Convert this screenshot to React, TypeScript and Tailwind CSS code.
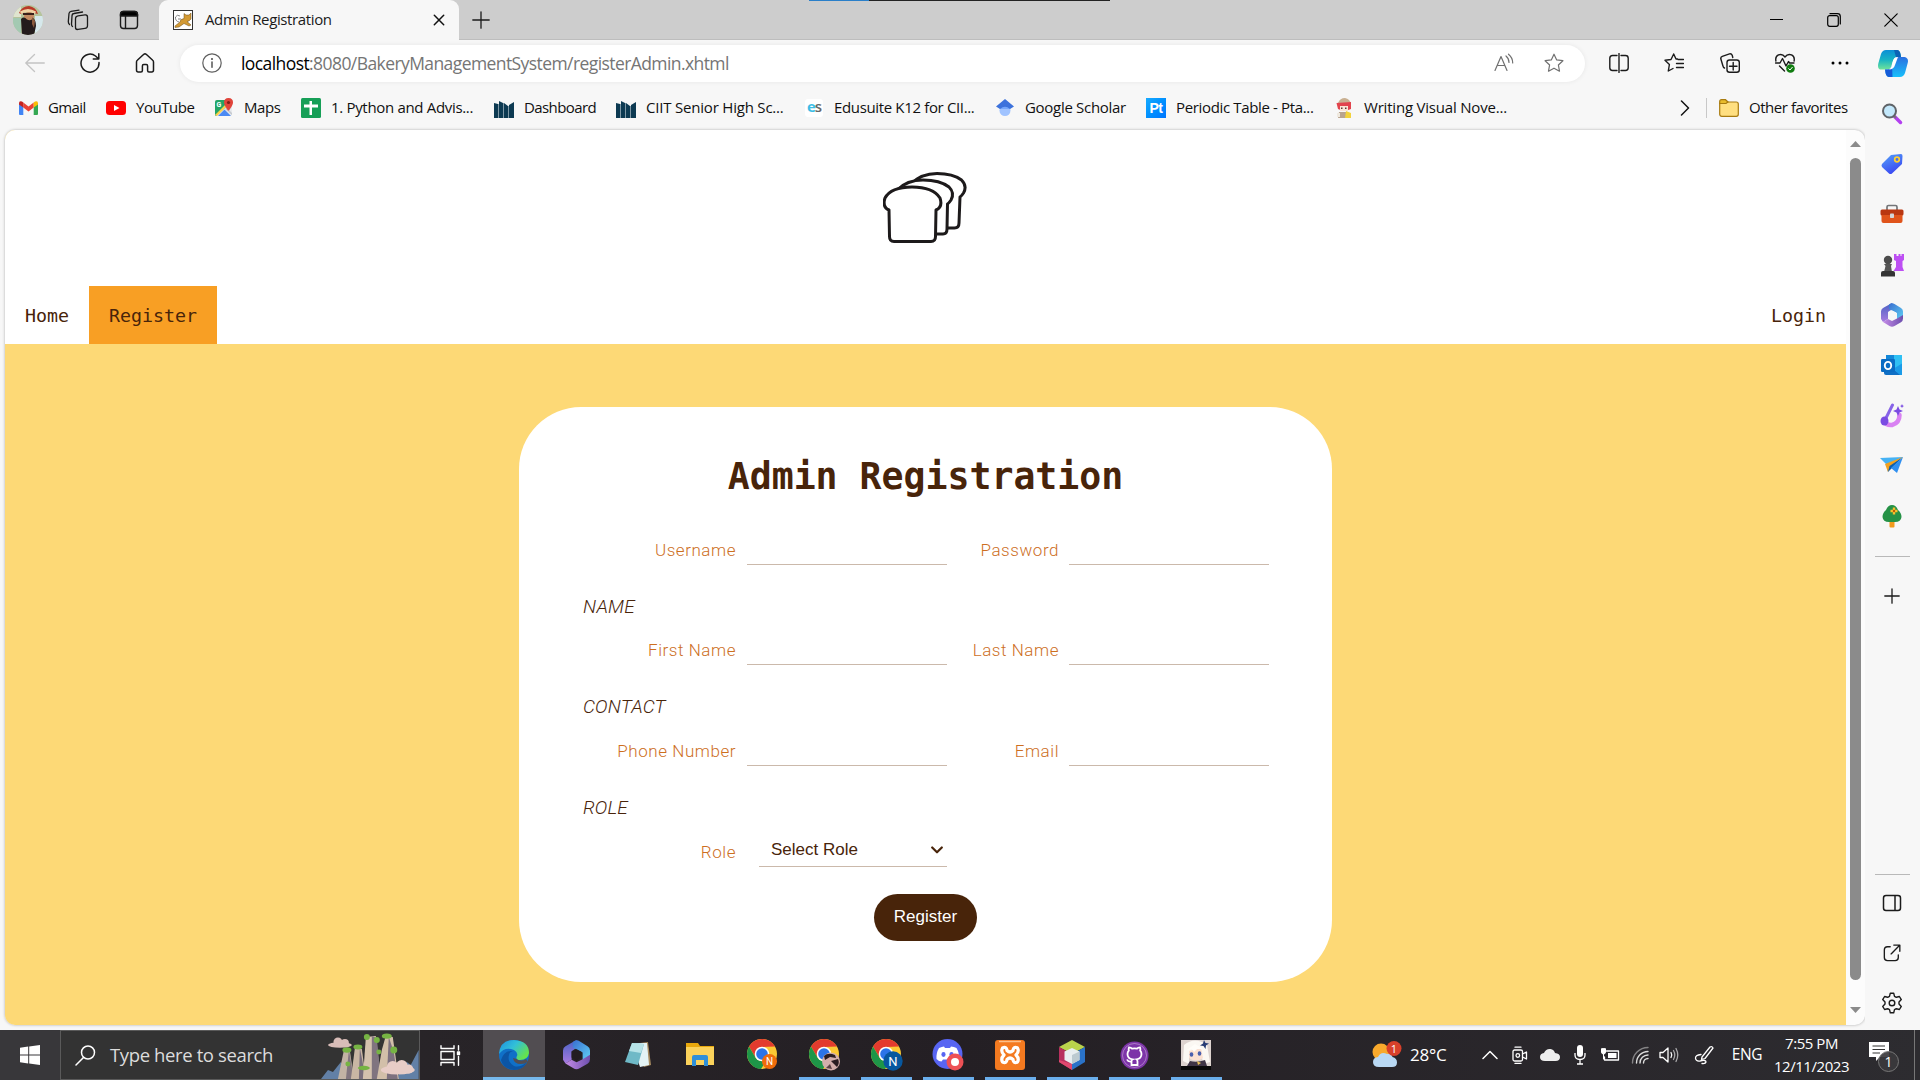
import type { ReactNode } from "react";

const UI = "font-['Open_Sans','Noto_Sans',sans-serif]";

function Cell({ w, children, className = "" }: { w: string; children?: ReactNode; className?: string }) {
  return <div className={`flex shrink-0 items-center justify-center ${w} ${className}`}>{children}</div>;
}

function Line({ children, size = 20, sw = 1.2, color = "#1b1b1b", box = 20 }: { children: ReactNode; size?: number; sw?: number; color?: string; box?: number }) {
  return (
    <svg width={size} height={size} viewBox={`0 0 ${box} ${box}`} fill="none" stroke={color} strokeWidth={sw} strokeLinecap="round" strokeLinejoin="round" className="shrink-0">
      {children}
    </svg>
  );
}

/* ---------- Tab strip ---------- */

function Avatar() {
  return (
    <svg width="30" height="30" viewBox="0 0 30 30">
      <defs><clipPath id="av"><circle cx="15" cy="15" r="15" /></clipPath></defs>
      <g clipPath="url(#av)">
        <rect width="30" height="30" fill="#b5c49c" />
        <rect x="0" y="0" width="8" height="12" fill="#dfe4cf" />
        <rect x="22" y="11" width="8" height="19" fill="#d6e8ec" />
        <rect x="0" y="13" width="8" height="17" fill="#a3c9b2" />
        <path d="M6 8 Q9 1 16 1 Q23 2 25 9 L21 8 Q14 4 8 9Z" fill="#b93a28" />
        <path d="M7 6.500 Q15 1.500 23 6.500 L22 9 Q14 5 8 9Z" fill="#efd2a4" />
        <ellipse cx="16" cy="11.500" rx="5" ry="4.500" fill="#c48a62" />
        <path d="M10 8 H21 V10 H10Z" fill="#3a1f1a" />
        <path d="M8 14 Q11 11 14 14.500 Q18 16.500 20 13 Q23 15 23 21 L21 30 H9Z" fill="#231b1c" />
        <path d="M19 12 l3 4 -1 7 -2 -4z" fill="#8a5a3e" />
      </g>
    </svg>
  );
}

function TabStrip() {
  return (
    <div className="flex h-10 items-stretch bg-[#cdcdcd]">
      <div className="flex w-[159px] items-center border-b border-[#bdbdbd]">
        <Cell w="w-[56px]"><Avatar /></Cell>
        <Cell w="w-[43px]">
          <Line size={22} sw={1.300} box={22}>
            <rect x="8.500" y="6" width="12" height="13.500" rx="2.500" transform="skewY(-8) translate(0 2.500)" />
            <path d="M5.500 17.500 C4.500 17 4.500 16 4.500 15 L5 7 Q5 4.800 7 4.500 L15.500 3" />
            <path d="M2.500 15.500 C1.500 14.500 1.300 14 1.300 12.500 L2 4.500 Q2.200 2.600 4 2.300 L12 1.200" />
          </Line>
        </Cell>
        <Cell w="w-[60px]">
          <Line size={20} sw={1.400}>
            <rect x="1.500" y="1.500" width="17" height="17" rx="3" />
            <path d="M6.500 6 V18" />
            <path d="M1.500 6 V4.500 Q1.500 1.500 4.500 1.500 H15.500 Q18.500 1.500 18.500 4.500 V6Z" fill="#000" />
          </Line>
        </Cell>
      </div>
      <div className="flex w-[300px] items-center rounded-t-[9px] bg-[#f7f7f7] pl-[14px]">
        <svg width="20" height="20" viewBox="0 0 20 20">
          <rect x=".5" y=".5" width="19" height="19" fill="#fff" stroke="#333" />
          <path d="M2 16 L7 12 Q7 9 11 8.500 L11 3.500 L13 5 L16 5 L18 3 L18 9 Q16 11.500 14 11.500 L18 15 L16 16 L11 13.500 L6 17 L2 17.500Z" fill="#d39a34" stroke="#6b4a14" strokeWidth=".5" />
          <path d="M6 12 Q2 11 2.500 7 Q4 4 7 6 M8 9 L5 9" stroke="#666" fill="none" strokeWidth=".8" />
        </svg>
        <span className={`-mt-0.5 ml-3 w-[228px] whitespace-nowrap text-[15px] tracking-[-0.37px] text-[#1b1b1b] ${UI}`}>Admin Registration</span>
        <Line size={12} sw={1.500} box={12} color="#111"><path d="M1.300 1.300 L10.700 10.700 M10.700 1.300 L1.300 10.700" /></Line>
      </div>
      <div className="flex flex-1 items-center border-b border-[#bdbdbd]">
        <Cell w="w-[43px]"><Line size={18} sw={1.300} box={18}><path d="M9 .8 V17.200 M.8 9 H17.200" /></Line></Cell>
        <div className="ml-[307px] flex h-px self-start">
          <div className="h-px w-[60px] bg-[#2a7fc9]" />
          <div className="h-px w-[241px] bg-[#222]" />
        </div>
        <div className="flex-1" />
        <Cell w="w-[57px]"><div className="h-px w-[13px] bg-black" /></Cell>
        <Cell w="w-[57px]">
          <Line size={14} sw={1.200} box={14} color="#000"><rect x=".7" y="2.700" width="10.600" height="10.600" rx="2" /><path d="M3 .7 H10.500 Q13.300 .7 13.300 3.500 V11" /></Line>
        </Cell>
        <Cell w="w-[58px]"><Line size={14} sw={1.200} box={14} color="#000"><path d="M.8 .8 L13.200 13.200 M13.200 .8 L.8 13.200" /></Line></Cell>
      </div>
    </div>
  );
}

/* ---------- Address bar ---------- */

const STAR = "M10 1.200 L12.700 6.900 L18.900 7.700 L14.400 12 L15.500 18.200 L10 15.200 L4.500 18.200 L5.600 12 L1.100 7.700 L7.300 6.900Z";

function Copilot() {
  return (
    <svg width="30" height="27" viewBox="0 0 30 27">
      <defs>
        <linearGradient id="cp1" x1="0" y1="0" x2="0" y2="1"><stop offset="0" stopColor="#0a8fd6" /><stop offset=".5" stopColor="#17b3c4" /><stop offset="1" stopColor="#6fe39a" /></linearGradient>
        <linearGradient id="cp2" x1="0" y1="0" x2="0" y2="1"><stop offset="0" stopColor="#2a6fe0" /><stop offset="1" stopColor="#18c0fb" /></linearGradient>
      </defs>
      <path d="M8 0 H19 Q21.500 0 22.500 4 L23 7 H19 Q16.500 7 15.500 10 L13.500 16 Q12.500 19.500 9 19.500 H3.500 Q-1 19.500 .3 13.500 L3 4 Q4.500 0 8 0Z" fill="url(#cp1)" />
      <path d="M22 27 H11 Q8.500 27 7.500 23 L7 19.500 H10 Q12.500 19.500 13.500 16.500 L16 10.500 Q17.500 7 21 7 H26.500 Q31 8 29.700 13 L27 23 Q25.500 27 22 27Z" fill="url(#cp2)" />
      <path d="M7 19.500 H10 Q12.500 19.500 13.500 16.500 L14 15 L14.500 27 H11 Q8.500 27 7.500 23Z" fill="#1546cf" opacity=".8" />
      <path d="M16 0 H19 Q21.500 0 22.500 4 L23 7 H18Z" fill="#0b63b5" />
      <path d="M14.500 12 Q15.500 7.200 20 7 L17.200 14.500 Q15.800 19.500 11 19.500 Q12.800 18.800 13.500 16Z" fill="#fff" />
    </svg>
  );
}

function AddressBar() {
  return (
    <div className="flex h-[46px] items-center bg-[#f7f7f7] pl-[7px]">
      <Cell w="w-[55px]"><Line color="#c4c4c4" sw={1.300}><path d="M19.300 10 H.8 M9.500 1.500 L.8 10 L9.500 18.500" /></Line></Cell>
      <Cell w="w-[55px]"><Line sw={1.500}><path d="M19 9.500 A9 9 0 1 1 15.500 3 L18.500 5.800 M18.800 .8 V6 H13.300" /></Line></Cell>
      <Cell w="w-[55px]"><Line sw={1.500}><path d="M1.500 9 Q1.500 8 2.300 7.300 L8.800 1.300 Q10 .3 11.200 1.300 L17.700 7.300 Q18.500 8 18.500 9 V17 Q18.500 19 16.800 19 H14 Q12.600 19 12.600 17.500 V13 Q12.600 11.500 11.300 11.500 H8.700 Q7.400 11.500 7.400 13 V17.500 Q7.400 19 6 19 H3.200 Q1.500 19 1.500 17Z" /></Line></Cell>
      <div className="ml-[8px] flex h-[37px] w-[1405px] items-center rounded-full bg-white shadow-[0_0_5px_rgba(0,0,0,0.07)]">
        <Cell w="w-[61px]"><div className="pl-[3px]"><Line color="#5f5f5f" sw={1.200}><circle cx="10" cy="10" r="9.200" /><path d="M10 9 V14.300" strokeWidth="1.600" /><circle cx="10" cy="6" r=".5" fill="#5f5f5f" /></Line></div></Cell>
        <div className={`flex-1 whitespace-nowrap text-[17.5px] tracking-[-0.58px] text-[#757575] ${UI}`}><span className="text-black">localhost</span>:8080/BakeryManagementSystem/registerAdmin.xhtml</div>
        <Cell w="w-[50px]"><Line color="#707070"><path d="M1 17.500 L7 3.500 L13 17.500 M3.200 12.500 H10.800 M12 3 Q15 5.500 15 9.500 M14.500 1.200 Q18.700 4.500 18.700 10" /></Line></Cell>
        <Cell w="w-[50px]"><Line color="#707070"><path d={STAR} /></Line></Cell>
        <div className="w-[6px]" />
      </div>
      <div className="w-[7px]" />
      <Cell w="w-[54px]"><Line sw={1.400}><path d="M8 2.500 H3.500 Q.8 2.500 .8 5.200 V14.800 Q.8 17.500 3.500 17.500 H8 M12 2.500 H16.500 Q19.200 2.500 19.200 5.200 V14.800 Q19.200 17.500 16.500 17.500 H12 M10 .5 V19.500" /></Line></Cell>
      <Cell w="w-[56px]"><Line sw={1.400}><path d="M13.500 6 L12 6 L9.700 1 L7 6.500 L1 7.300 L5.400 11.500 L4.300 18 L9 15.500 M14 6.500 H19.500 M12.500 10.500 H19.500 M12.500 14.500 H19.500" /></Line></Cell>
      <Cell w="w-[55px]"><Line sw={1.400}><rect x="7" y="7" width="12.300" height="12.300" rx="2.500" /><path d="M13.200 9.500 V17 M9.500 13.200 H17 M4.500 15 Q3.300 14.700 2.800 12.500 L.8 5.800 Q.5 4 2.300 3.300 L9.500 .9 Q11.500 .5 12.200 2.300 L12.800 4.500" /></Line></Cell>
      <Cell w="w-[55px]">
        <Line sw={1.400}><path d="M.9 8 Q0 3.500 3.500 1.900 Q7.500 .5 10 4 Q12.500 .5 16.500 1.900 Q20 3.500 19.100 8 M.5 10 H5 L7.500 5.500 L11 13 L13.500 8.500 L14.500 10 H19 M4.500 13 L9.500 18" /><circle cx="15.500" cy="15.500" r="4.300" fill="#107c10" stroke="none" /><path d="M13.700 15.700 L15 17 L17.300 14.300" stroke="#fff" strokeWidth="1" /></Line>
      </Cell>
      <Cell w="w-[55px]"><svg width="18" height="4" viewBox="0 0 18 4"><circle cx="2" cy="2" r="1.500" /><circle cx="9" cy="2" r="1.500" /><circle cx="16" cy="2" r="1.500" /></svg></Cell>
      <Cell w="w-[51px]"><Copilot /></Cell>
    </div>
  );
}

/* ---------- Favorites ---------- */

const ciit = (
  <svg width="20" height="20" viewBox="0 0 20 20"><path d="M0 5 L4 6 V20 H0Z M5 3 L9 5 V20 H5Z M10 5 L14 8 V20 H10Z M15 7 L20 4 V20 H15Z" fill="#0d3a52" /><path d="M4 6h1V20H4Z M9 5h1V20H9Z M14 8h1V20H14Z" fill="#7f98a6" /></svg>
);

const favorites: { label: string; w: string; track: string; icon: ReactNode }[] = [
  { label: "Gmail", w: "w-[88px]", track: "tracking-[-0.6px]", icon: <svg width="19" height="15" viewBox="0 0 19 15"><path d="M0 2 V13 Q0 14 1 14 H4.300 V5Z" fill="#4285f4" /><path d="M19 2 V13 Q19 14 18 14 H14.700 V5Z" fill="#34a853" /><path d="M4.300 1.500 L9.500 5.500 L14.700 1.500 V6.500 L9.500 10.500 L4.300 6.500Z" fill="#ea4335" /><path d="M0 2.500 Q0 -.8 3 .5 L4.300 1.500 V6.500 L0 3.500Z" fill="#c5221f" /><path d="M19 2.500 Q19 -.8 16 .5 L14.700 1.500 V6.500 L19 3.500Z" fill="#fbbc04" /></svg> },
  { label: "YouTube", w: "w-[108px]", track: "tracking-[-0.45px]", icon: <svg width="20" height="14" viewBox="0 0 20 14"><rect width="20" height="14" rx="3.500" fill="#f00" /><path d="M8 4 L13.500 7 L8 10Z" fill="#fff" /></svg> },
  { label: "Maps", w: "w-[87px]", track: "tracking-[-0.45px]", icon: <svg width="20" height="20" viewBox="0 0 20 20"><rect x="1" y="2" width="17" height="16" rx="2" fill="#e8eaed" /><path d="M3 2 H13 L12 9 L2 18 Q1 18 1 16 V4 Q1 2 3 2Z" fill="#23a566" /><path d="M4 18 L10.500 11.500 L17 18Z" fill="#4a89f3" /><path d="M11 11 L12.500 9.500 L18 15 V17Z" fill="#c5c9cf" /><path d="M3 18 L13 8 L11.500 6.500 L1 17Z" fill="#fcd04b" /><text x="2.500" y="9" fontSize="7" fill="#fff" fontWeight="700" fontFamily="Roboto">G</text><path d="M14.500 0 Q19 0 19 4.500 Q19 7 15 12.500 H14 Q10 7 10 4.500 Q10 0 14.500 0Z" fill="#e0443a" /><circle cx="14.500" cy="4.500" r="1.600" fill="#7e1d16" /></svg> },
  { label: "1. Python and Advis...", w: "w-[193px]", track: "tracking-[-0.32px]", icon: <svg width="20" height="20" viewBox="0 0 20 20"><rect width="20" height="20" rx="1.500" fill="#169f57" /><path d="M8.500 3 H11 V17 H8.500Z M3 6.500 H17 V9.500 H3Z" fill="#fff" /></svg> },
  { label: "Dashboard", w: "w-[122px]", track: "tracking-[-0.6px]", icon: ciit },
  { label: "CIIT Senior High Sc...", w: "w-[188px]", track: "tracking-[-0.2px]", icon: ciit },
  { label: "Edusuite K12 for CII...", w: "w-[191px]", track: "tracking-[-0.35px]", icon: <div className="flex h-[18px] w-[18px] items-center justify-center rounded-[3px] bg-white text-[15px] leading-none tracking-[-1px] text-[#666] font-['Open_Sans',sans-serif]"><span className="-mt-1 font-bold text-[#3dbde5]">e</span><span className="-mt-1 font-semibold">s</span></div> },
  { label: "Google Scholar", w: "w-[151px]", track: "tracking-[-0.3px]", icon: <svg width="18" height="18" viewBox="0 0 18 18"><circle cx="9" cy="11.500" r="5.500" fill="#a0c3ff" /><path d="M3.500 10 Q9 4 14.500 10Z" fill="#76a7fa" /><path d="M9 0 L0 7.500 L4 10 Q9 5.500 14 10 L18 7.500Z" fill="#3c72dc" /></svg> },
  { label: "Periodic Table - Pta...", w: "w-[188px]", track: "tracking-[-0.35px]", icon: <div className="flex h-5 w-5 items-center justify-center bg-linear-to-br from-[#17aaff] to-[#0075ff] text-[14px] leading-none font-bold tracking-[-0.5px] text-white font-['Liberation_Sans',sans-serif]">Pt</div> },
  { label: "Writing Visual Nove...", w: "w-[200px]", track: "tracking-[-0.2px]", icon: <svg width="18" height="20" viewBox="0 0 18 20"><path d="M3 5 Q5 0 10 0 Q15 1 16 6 L13 7 H4Z" fill="#c9b091" /><path d="M1.500 5 L16 4 V11 Q9 14 3 11Z" fill="#e2444d" /><path d="M5 8 H13 V13 H5Z" fill="#fbe5d6" /><path d="M6 9.500h1.500v1.500H6z M10 9.500h1.500v1.500H10z" fill="#5b3b36" /><path d="M4 14 H13 L14 20 H3Z" fill="#b9a48e" /><path d="M11 13 L16 15 V20 H10Z" fill="#f2d23c" /><path d="M2 15h3v4H2z" fill="#efe9df" /></svg> },
];

function Favorites() {
  return (
    <div className={`flex h-[44px] items-center bg-[#f7f7f7] pl-[18px] text-[15px] text-[#111] ${UI}`}>
      {favorites.map((f) => (
        <div key={f.label} className={`flex shrink-0 items-center gap-[10px] whitespace-nowrap ${f.w}`}>
          <Cell w="w-5">{f.icon}</Cell>
          <span className={`-mt-0.5 ${f.track}`}>{f.label}</span>
        </div>
      ))}
      <div className="w-[143px]" />
      <Line size={16} sw={1.500} box={16} color="#111"><path d="M4.500 1 L11.500 8 L4.500 15" /></Line>
      <div className="mr-3 ml-[13px] h-5 w-px bg-[#c8c8c8]" />
      <svg width="20" height="18" viewBox="0 0 20 18"><rect x=".7" y="3" width="18.600" height="14.300" rx="2" fill="#ffdf80" stroke="#a87b10" strokeWidth="1.200" /><path d="M.7 4.500 V2.500 Q.7 .7 2.500 .7 H6.500 L9 3 L7 4.500Z" fill="#e8bb2c" stroke="#a87b10" strokeWidth="1.200" /></svg>
      <span className="-mt-0.5 ml-[10px] whitespace-nowrap tracking-[-0.45px]">Other favorites</span>
    </div>
  );
}

/* ---------- Web page ---------- */

function Bread() {
  return (
    <svg width="84" height="72" viewBox="0 0 84 72" fill="#fff" stroke="#1d1a1b" strokeWidth="3" strokeLinejoin="round">
      <path d="M28 12 Q38 1.500 54 1.500 Q70 1.500 78.500 8 Q84.500 14 80.500 21 Q78.500 24 77 25 L76 51 Q76 56 71.500 56 H60" />
      <path d="M14 18 Q24 8 40 8 Q57 8 66 15 Q72 21 68 28 Q66 31 64.500 32 L64 57 Q64 62 60 62 H50" />
      <path d="M6 38 Q-1 35 2 26 Q8 15 29 15 Q50 15 57 26 Q60 35 53 38 L52.500 64.500 Q52.500 69.500 48 69.500 H11 Q6.500 69.500 6.500 64.500Z" />
    </svg>
  );
}

const LABEL = "text-right text-[17px] font-light tracking-[0.55px] whitespace-nowrap text-[#cd6f1f] font-['Roboto',sans-serif]";

function Field({ label, w, gap }: { label: string; w: string; gap: string }) {
  return (
    <label className="flex h-[30px] items-stretch">
      <span className={`shrink-0 leading-[30px] ${w} ${LABEL}`}>{label}</span>
      <input className={`w-[200px] border-b border-[#cbb9ab] bg-transparent outline-none ${gap}`} />
    </label>
  );
}

function Heading({ children }: { children: ReactNode }) {
  return <div className="mt-[26px] mb-3 h-8 pl-[64px] text-[19px] leading-8 font-light tracking-[0.15px] text-[#48240a] italic font-['Roboto',sans-serif]">{children}</div>;
}

const MONO = "font-['DejaVu_Sans_Mono',monospace] text-[#48240a]";

function Page() {
  return (
    <div className="flex h-[895px] w-[1860px] overflow-hidden rounded-[10px] bg-[#fcfcfc] shadow-[0_0_3px_rgba(0,0,0,0.3)]">
      <div className="w-[1841px] bg-[#fdd976]">
        <header className="h-[214px] bg-white">
          <div className="flex h-[156px] justify-center pt-[42px] pr-px"><Bread /></div>
          <nav className={`flex h-[58px] items-center text-[18.3px] ${MONO}`}>
            <a className="w-[84px] pt-0.5 pl-5">Home</a>
            <a className="flex h-full w-32 items-center justify-center bg-[#f89f24] pt-0.5">Register</a>
            <a className="ml-auto pt-0.5 pr-5">Login</a>
          </nav>
        </header>
        <main className="mx-auto mt-[63px] h-[575px] w-[813px] rounded-[62px] bg-white pt-10">
          <h1 className={`text-center text-[36.5px] leading-[60px] font-bold ${MONO}`}>Admin Registration</h1>
          <div className="mt-7 flex"><Field label="Username" w="w-[217px]" gap="ml-[11px]" /><Field label="Password" w="w-[112px]" gap="ml-[10px]" /></div>
          <Heading>NAME</Heading>
          <div className="flex"><Field label="First Name" w="w-[217px]" gap="ml-[11px]" /><Field label="Last Name" w="w-[112px]" gap="ml-[10px]" /></div>
          <Heading>CONTACT</Heading>
          <div className="mt-[13px] flex"><Field label="Phone Number" w="w-[217px]" gap="ml-[11px]" /><Field label="Email" w="w-[112px]" gap="ml-[10px]" /></div>
          <Heading>ROLE</Heading>
          <div className="mt-[13px] flex h-[30px]">
            <span className={`w-[217px] leading-[30px] ${LABEL}`}>Role</span>
            <div className="ml-[23px] flex w-[188px] items-center justify-between border-b border-[#cbb9ab] pr-1 pb-[3px] pl-[12px] text-[17px] text-[#48240a] font-['Liberation_Sans',sans-serif]">
              <span>Select Role</span>
              <Line size={12} sw={2.200} box={12} color="#48240a"><path d="M1.200 3.500 L6 8.300 L10.800 3.500" /></Line>
            </div>
          </div>
          <button className="mx-auto mt-[27px] flex h-[47px] w-[103px] justify-center rounded-full bg-[#48240a] pt-[10px] text-[17px] text-white font-['Liberation_Sans',sans-serif]">Register</button>
        </main>
      </div>
      <div className="flex w-[19px] flex-col items-center">
        <svg width="11" height="6" viewBox="0 0 11 6" className="mt-[11px]"><path d="M5.500 0 L11 6 H0Z" fill="#8b8b8b" /></svg>
        <div className="mt-[11px] h-[822px] w-[11px] rounded-full bg-[#8b8b8b]" />
        <svg width="11" height="6" viewBox="0 0 11 6" className="mt-[27px]"><path d="M5.500 6 L11 0 H0Z" fill="#8b8b8b" /></svg>
      </div>
    </div>
  );
}

/* ---------- Sidebar ---------- */

function M365({ w = 22 }: { w?: number }) {
  return (
    <svg width={w} height={w * 1.1} viewBox="0 0 22 24">
      <defs>
        <linearGradient id="ma" x1="0" y1="0" x2="0" y2="1"><stop offset="0" stopColor="#4a62c4" /><stop offset="1" stopColor="#a87be0" /></linearGradient>
        <linearGradient id="mb" x1="0" y1="0" x2="1" y2="1"><stop offset="0" stopColor="#3a6fd0" /><stop offset="1" stopColor="#5fd0f5" /></linearGradient>
        <linearGradient id="mc" x1="0" y1="0" x2="1" y2="0"><stop offset="0" stopColor="#c48be6" /><stop offset="1" stopColor="#6d4fae" /></linearGradient>
      </defs>
      <path d="M11 0 L2 5 Q0 6.300 0 8.500 V16 L2 19 L7 16 V9 L13 5 Z" fill="url(#ma)" />
      <path d="M8 1.500 Q11 -.8 13.500 1 L20 5 Q22 6.300 22 8.500 V15 L16 16 V10 L8 6Z" fill="url(#mb)" />
      <path d="M22 12 V15.500 Q22 18 20 19.200 L13.500 23 Q11 24.500 8.500 23 L2 19 L7 16 L11 18 L16 15.500Z" fill="url(#mc)" />
      <path d="M11 7.500 L15 9.500 V14.200 L11 16.800 L7 14.200 V9.500Z" fill={w > 24 ? "#221c20" : "#f7f7f7"} />
    </svg>
  );
}

const side: ReactNode[] = [
  <svg width="22" height="22" viewBox="0 0 22 22"><path d="M13 13 L19.500 19.500" stroke="#b340f0" strokeWidth="3.500" strokeLinecap="round" /><path d="M12 12 L15 15" stroke="#777" strokeWidth="2" /><circle cx="8.500" cy="8" r="6.500" fill="#c3e8fb" stroke="#606468" strokeWidth="2" /></svg>,
  <svg width="22" height="22" viewBox="0 0 22 22"><defs><linearGradient id="tg" x1="0" y1="0" x2=".5" y2="1"><stop offset="0" stopColor="#55a5f8" /><stop offset="1" stopColor="#3a48f2" /></linearGradient></defs><path d="M10 2 L20 1 Q21.500 1 21.500 3 L21 11 L11 20.500 Q9.500 21.500 8 20.500 L1 14 Q0 12.500 1 11Z" fill="url(#tg)" /><circle cx="16" cy="6.500" r="2.300" fill="#4870e8" stroke="#ffd02f" strokeWidth="1.700" /></svg>,
  <svg width="24" height="20" viewBox="0 0 24 20"><path d="M7 6 V3 Q7 1.500 8.500 1.500 H15.500 Q17 1.500 17 3 V6" fill="none" stroke="#737578" strokeWidth="1.700" /><rect x=".5" y="5.500" width="23" height="6" rx="1.500" fill="#b93711" /><path d="M1.500 11 H22.500 V17 Q22.500 19 20.500 19 H3.500 Q1.500 19 1.500 17Z" fill="#e0541b" /><rect x="10" y="9.500" width="4" height="4.500" rx=".8" fill="#d3d6d9" /></svg>,
  <svg width="24" height="24" viewBox="0 0 24 24"><path d="M14 1 h2.500 v2 h2 v-2 h2 v2 h1 v-2 H24 V7 L22.500 8 V14 L24 18 H13.500 L16 14 V8 L14 7Z" fill="#bd4ff3" /><circle cx="8" cy="7" r="4.200" fill="#4c4c4c" /><path d="M4 11 H12 L11 13 L12 19 H4 L5.500 13Z" fill="#555" /><path d="M1 20 Q1 18 3 18 H13 Q15 18 15 20 V23.500 H1Z" fill="#343434" /></svg>,
  <M365 />,
  <svg width="22" height="22" viewBox="0 0 22 22"><rect x="5" y="1" width="16" height="13" fill="#2fc0f4" /><path d="M5 1h8v6H5z" fill="#1387d8" /><path d="M3 11 L21 20 V21 H5 Q3 21 3 19Z" fill="#0f6fc5" /><path d="M21 9.500 L12 15 L19 21 H21Z" fill="#1b9be8" /><rect x="0" y="5" width="14" height="13" rx="1.300" fill="#0a6cc4" /><ellipse cx="7" cy="11.500" rx="3.200" ry="3.600" fill="none" stroke="#fff" strokeWidth="1.900" /></svg>,
  <svg width="24" height="25" viewBox="0 0 24 25"><path d="M4 18 Q6 22.500 12 22 Q19.500 20 19.500 12" stroke="#d982f2" strokeWidth="4.500" fill="none" strokeLinecap="round" /><path d="M12.500 2 L6 15" stroke="#8763e8" strokeWidth="3" strokeLinecap="round" /><ellipse cx="4.500" cy="18" rx="4" ry="4.500" fill="#7a4ce2" /><path d="M18 3 l1.500 3.500 L23 8 l-3.500 1.500 L18 13 l-1.500 -3.500 L13 8 l3.500 -1.500Z" fill="#7a4ce2" /><path d="M22 1 l.7 1.500 L24 3 l-1.300 .7 L22 5 l-.7 -1.300 L20 3 l1.300 -.5Z" fill="#7a4ce2" /></svg>,
  <svg width="24" height="18" viewBox="0 0 24 18"><path d="M0 2 L23 1 L8 10Z" fill="#46b2f4" /><path d="M23 1 L7 10 L8 16 L12 12 Z" fill="#0c5fae" /><path d="M23 1 L11 12 L17 17Z" fill="#2f8ff0" /><path d="M23 1 L5 8 L8 16 L9.500 10Z" fill="#f2a11e" /></svg>,
  <svg width="20" height="24" viewBox="0 0 20 24"><rect x="7.500" y="16" width="5" height="7.500" rx="1" fill="#f19a1c" /><path d="M10 1 Q14 1 16 6 Q19.500 9 19.500 13 Q19 18 13 18 H7 Q1 18 .5 13 Q.5 9 4 6 Q6 1 10 1Z" fill="#259246" /><path d="M12 3.500 V10.500 M8.500 7 H15.500" stroke="#fbc02d" strokeWidth="2.400" /><circle cx="12" cy="7" r="1.200" fill="#bb5b05" /></svg>,
];

function Sidebar() {
  return (
    <aside className="flex w-[55px] shrink-0 flex-col items-center bg-[#f7f7f7] pr-px">
      <div className="mt-[3px] flex flex-col">
        {side.map((s, i) => <div key={i} className="flex h-[50.2px] w-[54px] items-center justify-center">{s}</div>)}
      </div>
      <div className="mt-[15px] h-px w-[35px] bg-[#b9b9b9]" />
      <div className="mt-[31px]"><Line size={16} sw={1.300} box={16}><path d="M8 .8 V15.200 M.8 8 H15.200" /></Line></div>
      <div className="flex-1" />
      <div className="mb-[3px] h-px w-[35px] bg-[#b9b9b9]" />
      <Cell w="w-[54px]" className="h-[50px]"><Line size={20} sw={1.500}><rect x="1.500" y="2.500" width="17" height="15" rx="2.500" /><path d="M13 3 V17" /></Line></Cell>
      <Cell w="w-[54px]" className="h-[50px]"><Line size={18} sw={1.500}><path d="M8 3 H5 Q1.500 3 1.500 6.500 V15 Q1.500 18.500 5 18.500 H13.500 Q17 18.500 17 15 V12 M12 1.200 H18.700 V8 M18.500 1.500 L9 11" /></Line></Cell>
      <Cell w="w-[54px]" className="mb-[2px] h-[50px]"><Line size={22} sw={1.400} box={22}><path d="M9.300 1.200 H12.700 L13.500 4.300 L15.300 5.300 L18.400 4.500 L20.300 7.600 L18 10 V12 L20.300 14.400 L18.400 17.500 L15.300 16.700 L13.500 17.700 L12.700 20.800 H9.300 L8.500 17.700 L6.700 16.700 L3.600 17.500 L1.700 14.400 L4 12 V10 L1.700 7.600 L3.600 4.500 L6.700 5.300 L8.500 4.300Z" /><circle cx="11" cy="11" r="2.800" /></Line></Cell>
    </aside>
  );
}

/* ---------- Taskbar ---------- */

function Chrome({ children }: { children?: ReactNode }) {
  return (
    <svg width="34" height="34" viewBox="-1 0 34 34">
      <circle cx="16" cy="16" r="15" fill="#fcc934" />
      <path d="M3 8.500 A15 15 0 0 1 29 8.500 L16 9 L9.500 19.500Z" fill="#e33b2e" />
      <path d="M3 8.500 L9.600 19.700 Q12 23 16 23 L22 20 L15 31 A15 15 0 0 1 3 8.500Z" fill="#1e9648" />
      <circle cx="16" cy="16" r="7.300" fill="#fff" /><circle cx="16" cy="16" r="5.800" fill="#2b74e8" />
      {children}
    </svg>
  );
}

const Badge = ({ fill, r, cx, cy, children }: { fill: string; r: number; cx: number; cy: number; children?: ReactNode }) => (
  <g><circle cx={cx} cy={cy} r={r} fill={fill} />{children}</g>
);

const apps: { icon: ReactNode; state: string }[] = [
  { state: "active", icon: <svg width="30" height="30" viewBox="0 0 30 30"><defs><linearGradient id="e1" x1="0" y1="0" x2="1" y2=".6"><stop offset="0" stopColor="#1c8fe0" /><stop offset=".5" stopColor="#32c0d8" /><stop offset="1" stopColor="#66e34b" /></linearGradient></defs><circle cx="15" cy="15" r="15" fill="#1070c8" /><path d="M0 14 Q1 0 15 0 Q30 1 30 13 Q29 20 21 20 Q17 20 17.500 17 Q20 13 15 10 Q6 6 0 14Z" fill="url(#e1)" /><path d="M10 15 Q8 22 15 26 Q21 28 28 22 Q24 30 15 30 Q4 29 2 20 Q5 10 14 11 Q10 12 10 15Z" fill="#0c55a5" /><path d="M14 18 Q15 24 22 24 Q26 24 29 21.500 L27 19 Q22 22 17.500 19Z" fill="#534e53" /></svg> },
  { state: "", icon: <M365 w={27} /> },
  { state: "", icon: <svg width="28" height="26" viewBox="0 0 28 26"><path d="M8 2 L24 0 L27 23 L20 25Z" fill="#a78b60" /><path d="M8 1 L23 1 L25 23 L16 25Z" fill="#e4f3f5" /><path d="M8 1 L20 2 L14 23 L1 20Z" fill="#6fb9c7" /><path d="M8 1 L20 2 L17 11 L5 9Z" fill="#b7e3e8" /></svg> },
  { state: "", icon: <svg width="28" height="24" viewBox="0 0 28 24"><path d="M0 0 H12 L14 3 H28 V21 H0Z" fill="#e9a80c" /><rect y="4" width="28" height="18" fill="#fbd25b" /><path d="M6 23 V14 Q6 12 8 12 H20 Q22 12 22 14 V23 H18 V17 H10 V23Z" fill="#2f8fd8" /></svg> },
  { state: "", icon: <Chrome><Badge fill="#ef6c0b" cx={23.5} cy={23.5} r={7.5}><text x="23.500" y="27.300" textAnchor="middle" fontSize="10" fill="#fff" fontFamily="Roboto">N</text></Badge></Chrome> },
  { state: "open", icon: <Chrome><Badge fill="#d3aeab" cx={23} cy={23.5} r={9}><path d="M16 18 Q20 14 27 17 L28 20 L22 19 L17 22Z M23 23 L30 21 Q32 25 29 29 L26 26Z" fill="#2a1d22" /><path d="M18 30 l4 -4 2 5z" fill="#5b4146" /></Badge></Chrome> },
  { state: "open", icon: <Chrome><Badge fill="#07579f" cx={23} cy={23} r={9.7}><text x="23" y="27.700" textAnchor="middle" fontSize="13" fill="#fff" fontFamily="Roboto">N</text></Badge></Chrome> },
  { state: "open", icon: <svg width="32" height="32" viewBox="0 0 32 32"><circle cx="15.500" cy="15" r="15" fill="#5865f2" /><path d="M7 9 Q10 7.500 12 7.500 L13 9 H18 L19 7.500 Q22 7.500 24.500 9 Q27.500 14 27 20 Q24 22.500 21.500 22.500 L20 20.500 H11 L9.500 22.500 Q7 22.500 4.500 20 Q4 14 7 9Z" fill="#fff" /><ellipse cx="11.500" cy="15.500" rx="2.100" ry="2.400" fill="#5865f2" /><ellipse cx="19.500" cy="15.500" rx="2.100" ry="2.400" fill="#5865f2" /><circle cx="23" cy="23" r="8.500" fill="#ed5156" /><circle cx="23" cy="23" r="4" fill="#fff" /></svg> },
  { state: "open", icon: <svg width="30" height="30" viewBox="0 0 30 30"><rect width="30" height="30" rx="3" fill="#f47a20" /><path d="M4 1.500 H26" stroke="#fdc089" strokeWidth="1.500" /><path d="M7.500 8 Q11.500 6 12 10.500 Q15 13.500 18 10.500 Q18.500 6 22.500 8 Q24.500 11.500 21 15 Q24.500 18.500 22.500 22 Q18.500 24 18 19.500 Q15 16.500 12 19.500 Q11.500 24 7.500 22 Q5.500 18.500 9 15 Q5.500 11.500 7.500 8Z" fill="none" stroke="#fff" strokeWidth="3.200" strokeLinejoin="round" /></svg> },
  { state: "open", icon: <svg width="28" height="30" viewBox="0 0 28 30"><path d="M14 0 L27 7 L14 14 L1 7Z" fill="#b9d34c" /><path d="M1 7 L14 14 V30 L1 22Z" fill="#b8305e" /><path d="M27 7 L14 14 V30 L27 22Z" fill="#2a72c8" /><path d="M1 20 L14 24 V30 L1 22Z" fill="#e0486f" /><path d="M14 8 L21.500 11.500 V20 L14 24 L6.500 20 V11.500Z" fill="#e8eef0" /><path d="M14 15 L21.500 11.500 V20 L14 24Z" fill="#bccad0" /></svg> },
  { state: "open", icon: <svg width="29" height="29" viewBox="0 0 29 29"><circle cx="14.500" cy="14.500" r="14" fill="#7d34a8" /><path d="M11.500 24 V20.500 Q8 21 7 18.500 M11.500 24 V20 Q12 18.500 12.500 18.300 Q7.500 17.500 7.500 13 Q7.500 11 8.800 9.600 Q8.300 8 9 6.300 Q11 6.300 12 7.600 Q14.500 7 17 7.600 Q18 6.300 20 6.300 Q20.700 8 20.200 9.600 Q21.500 11 21.500 13 Q21.500 17.500 16.500 18.300 Q17.500 19 17.500 20.500 V24Z" fill="none" stroke="#fff" strokeWidth="1.800" /><circle cx="14.500" cy="14.500" r="12" fill="none" stroke="#fff" strokeWidth="1" opacity=".35" /></svg> },
  { state: "open", icon: <svg width="30" height="30" viewBox="0 0 30 30"><rect width="30" height="30" fill="#ddd3cf" /><path d="M3 5 Q14 -4 26 5 L29 22 L22 24 L20 10 L8 14 V24 L2 21Z" fill="#fbf8f3" /><path d="M8 11 L20 8 L22 18 Q15 23 8 18Z" fill="#fbe0d2" /><ellipse cx="10.500" cy="14.500" rx="1.800" ry="2.300" fill="#4a5fae" /><ellipse cx="18.500" cy="13.500" rx="1.800" ry="2.300" fill="#4a5fae" /><path d="M6 10 L14 4 L22 9 L16 9 L13 12 L11 9Z" fill="#fffdf9" /><path d="M23 0 L24.500 3 L28 3.500 L25 5.500 L24.500 9 L22.500 6 L19 5.500 L22 3.500Z" fill="#273c74" /><path d="M9 21 Q16 23 24 20 L26 26 H6Z" fill="#3f3546" /><path d="M16 21 L20 23 L17 25Z" fill="#e8c15a" /><rect y="26" width="30" height="4" fill="#0a0a0a" /></svg> },
];

function SearchArt() {
  return (
    <svg width="98" height="47" viewBox="0 0 98 47">
      <path d="M0 47 L7 38 L12 40 L20 30 L30 47Z M75 47 L86 30 L90 33 L98 18 V47Z" fill="#6280a6" />
      <path d="M17 47 L23 18 L29 19 L33 47Z" fill="#c2b3a4" /><path d="M25 47 L28 18 L33 47Z" fill="#82767f" />
      <path d="M30 47 L34 16 L41 17 L45 47Z" fill="#c9b6a4" /><path d="M38 47 L39 16 L45 47Z" fill="#7a6f7c" />
      <path d="M42 47 L45 5 L55 4 L60 47Z" fill="#d4c2ad" /><path d="M51 47 L51 4 L56 6 L60 47Z" fill="#80747f" />
      <path d="M56 47 L61 18 L65 4 L72 5 L78 47Z" fill="#d2bfa9" /><path d="M66 47 L68 5 L73 20 L77 47Z" fill="#7d717f" />
      <g fill="#76b443"><ellipse cx="26" cy="18" rx="4.500" ry="2.800" /><ellipse cx="37" cy="15" rx="4.500" ry="2.500" /><circle cx="46" cy="5" r="3" /><circle cx="56" cy="8" r="3" /><ellipse cx="66" cy="4" rx="5" ry="2.600" /><circle cx="73" cy="18" r="3.500" /><circle cx="27" cy="32" r="2.500" /><ellipse cx="43" cy="36" rx="6" ry="2.200" /><circle cx="58" cy="20" r="2.500" /></g>
      <g fill="#d9bdb8"><ellipse cx="19" cy="13" rx="12" ry="2.800" /><circle cx="17" cy="10" r="4.500" /><circle cx="24" cy="11" r="4" /></g>
      <g fill="#e8cdc7"><ellipse cx="77" cy="38" rx="17" ry="4.500" /><circle cx="72" cy="35" r="6" /><circle cx="81" cy="34" r="6" /><circle cx="88" cy="37" r="4.500" /></g>
    </svg>
  );
}

function Taskbar() {
  return (
    <footer className={`flex h-[50px] items-stretch bg-linear-to-r from-[#2b282b] via-[#241f24] to-[#2d2c30] text-white ${UI}`}>
      <Cell w="w-[60px]" className="bg-[#38373a]"><svg width="20" height="20" viewBox="0 0 20 20" fill="#fff"><path d="M0 2.800 L8.200 1.600 V9.500 H0Z M9.200 1.500 L20 0 V9.500 H9.200Z M0 10.500 H8.200 V18.400 L0 17.200Z M9.200 10.500 H20 V20 L9.200 18.500Z" /></svg></Cell>
      <div className="flex w-[360px] items-center overflow-hidden border border-[#5a5a5a] bg-[#333] pl-[14px]">
        <Line size={21} sw={1.500} box={21} color="#fff"><circle cx="13" cy="7.500" r="6.500" /><path d="M8.500 12.500 L1 20" /></Line>
        <span className="ml-[14px] w-[212px] whitespace-nowrap text-[18.5px] tracking-[-0.38px] text-[#dcdcdc]">Type here to search</span>
        <SearchArt />
      </div>
      <Cell w="w-[63px]"><div className="pr-[2px]"><Line size={21} sw={1.400} box={21} color="#fff"><path d="M1 .8 V3.500 H14 V.8 M1 20.200 V17.500 H14 V20.200 M1 6.500 H14 V14.500 H1Z M18.500 .8 V5 M18.500 11.500 V20.200" /><rect x="17.500" y="7" width="2" height="2.500" fill="#fff" /></Line></div></Cell>
      {apps.map((a, i) => (
        <div key={i} className={a.state === "active" ? "flex w-[62px] flex-col items-center bg-[#514d51]" : "flex w-[62px] flex-col items-center"}>
          <div className="flex h-[47px] items-center justify-center pt-[3px]">{a.icon}</div>
          {a.state === "active" && <div className="h-[3px] w-[62px] bg-[#76b9ed]" />}
          {a.state === "open" && <div className="h-[3px] w-[51px] bg-[#6aaeec]" />}
        </div>
      ))}
      <div className="flex-1" />
      <Cell w="w-[38px]">
        <svg width="32" height="30" viewBox="0 0 32 30"><circle cx="10" cy="12" r="8.500" fill="#f8a92c" /><path d="M8 27 Q2 27 2 22 Q2 17.500 7 17 Q10 11 16 14 Q20 13 21.500 17 Q26 18 26 22.500 Q26 27 21 27Z" fill="#b9d8f3" /><circle cx="23" cy="8.500" r="7.500" fill="#d8402a" /><text x="23" y="12.500" textAnchor="middle" fontSize="11" fill="#fff" fontFamily="Open Sans">1</text></svg>
      </Cell>
      <div className="w-[52px] self-center pl-[4px] text-[17px] tracking-[-0.2px]">28°C</div>
      <div className="w-[17px]" />
      <Cell w="w-[30px]"><Line size={16} sw={1.500} box={16} color="#fff"><path d="M1 11.500 L8 4.500 L15 11.500" /></Line></Cell>
      <Cell w="w-[30px]"><Line size={18} sw={1.300} box={18} color="#fff"><rect x="2" y="4" width="9.500" height="11" rx="1.500" /><circle cx="6.800" cy="9.500" r="1.800" /><path d="M11.500 8 L15.500 6 V13 L11.500 11 M4 1.200 H10 M4 17.500 H10" /></Line></Cell>
      <Cell w="w-[30px]"><svg width="20" height="14" viewBox="0 0 20 14"><path d="M5 13 Q0 13 0 9 Q0 5.500 4 5 Q6 .5 10.500 1 Q14 1.500 15 5 Q20 5.500 20 9 Q20 13 15.500 13Z" fill="#eee" /></svg></Cell>
      <Cell w="w-[29px]"><svg width="12" height="20" viewBox="0 0 12 20"><rect x="3" y="0" width="6" height="12" rx="3" fill="#fff" /><path d="M1 8 V10 Q1 14.500 6 14.500 Q11 14.500 11 10 V8 M6 14.500 V19 M3 19 H9" fill="none" stroke="#fff" strokeWidth="1.300" /></svg></Cell>
      <Cell w="w-[31px]"><Line size={20} sw={1.300} color="#fff"><path d="M6.500 6 H18.500 V15 H4.500 V12" /><rect x="8" y="8" width="8.500" height="5" fill="#fff" stroke="none" /><path d="M1.500 4 V7 Q1.500 9 3.500 9 Q5.500 9 5.500 7 V4Z M3.500 9 V14" fill="#fff" strokeWidth="1" /></Line></Cell>
      <Cell w="w-[29px]"><Line size={18} sw={1.400} box={18} color="#ddd"><path d="M1.500 17 A15.500 15.500 0 0 1 17 1.500" opacity=".5" /><path d="M5.500 17 A11.500 11.500 0 0 1 17 5.500 M9 17 A8 8 0 0 1 17 9 M12.500 17 A4.500 4.500 0 0 1 17 12.500" /></Line></Cell>
      <Cell w="w-[30px]"><Line size={20} sw={1.300} color="#fff"><path d="M1 7.500 H4 L9 3 V17 L4 12.500 H1Z" /><path d="M12 7.500 Q13.500 10 12 12.500" /><path d="M14.500 5.500 Q17 10 14.500 14.500 M17 3.500 Q20.500 10 17 16.500" opacity=".6" /></Line></Cell>
      <Cell w="w-[40px]"><Line size={20} sw={1.300} color="#fff"><path d="M8 12 L16 2 Q18 1 19 3 L11 13.500 L7.500 14.500Z M7 9.500 Q1 10 1.500 13.500 Q2 16.500 6 16 Q12 14.500 12 17 Q11.500 19 8 18.500" /></Line></Cell>
      <Cell w="w-[46px]" className="text-[15.5px] tracking-[-0.4px]">ENG</Cell>
      <div className="flex w-[83px] flex-col items-center justify-center text-[15px] leading-[23px] tracking-[-0.45px] whitespace-nowrap"><span>7:55 PM</span><span>12/11/2023</span></div>
      <Cell w="w-[61px]"><svg width="32" height="34" viewBox="0 0 32 34"><path d="M1 4 H21 V19 H12 L8 23 V19 H1Z" fill="#fff" /><path d="M4.500 8 H17 M4.500 11.500 H17 M4.500 15 H12" stroke="#333" strokeWidth="1" /><circle cx="20.500" cy="23.500" r="10" fill="#3b3a3d" fillOpacity=".92" stroke="#777" strokeWidth="1" /><text x="20.500" y="29" textAnchor="middle" fontSize="14" fill="#fff" fontFamily="Open Sans">1</text></svg></Cell>
      <div className="w-[6px] border-l border-[#777]" />
    </footer>
  );
}

export default function App() {
  return (
    <div className="flex h-[1080px] w-[1920px] flex-col overflow-hidden bg-[#f7f7f7]">
      <TabStrip />
      <AddressBar />
      <div className="flex h-[944px]">
        <div className="flex w-[1865px] flex-col">
          <Favorites />
          <div className="pl-[5px]"><Page /></div>
        </div>
        <Sidebar />
      </div>
      <Taskbar />
    </div>
  );
}
